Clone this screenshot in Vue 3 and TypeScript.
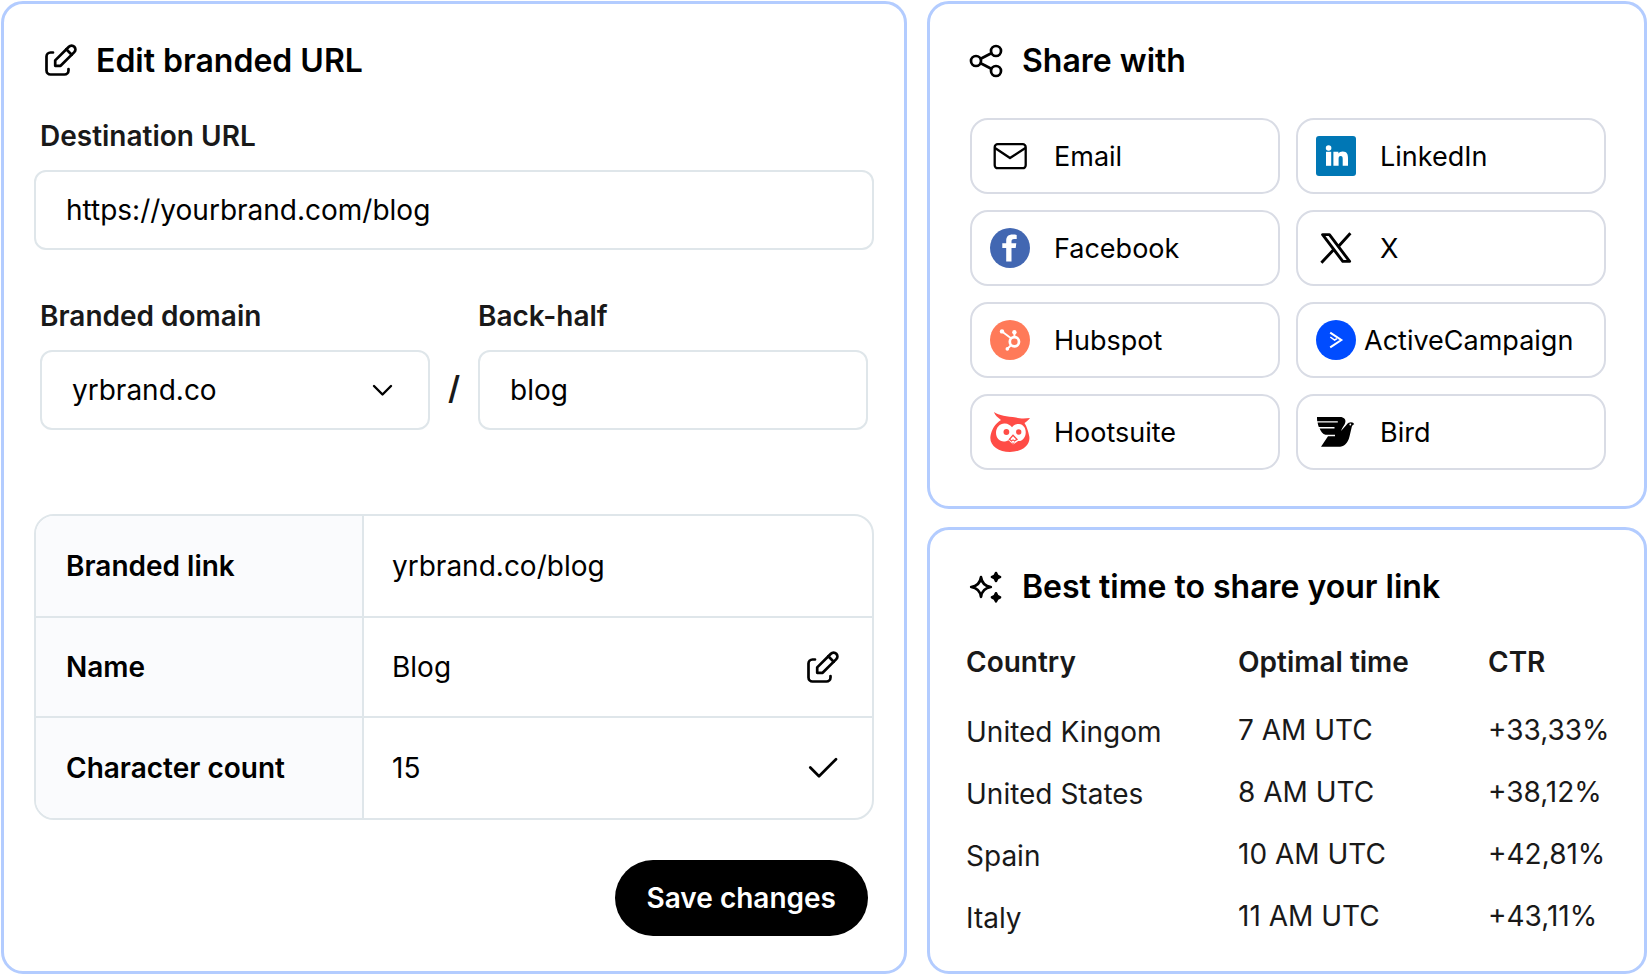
<script setup lang="ts">
import { ref } from 'vue'

interface Channel {
  id: string
  name: string
  tight?: boolean
}

interface TimeSlot {
  country: string
  time: string
  ctr: string
}

const destination = ref('https://yourbrand.com/blog')
const domain = ref('yrbrand.co')
const backHalf = ref('blog')

const channels: Channel[] = [
  { id: 'email', name: 'Email' },
  { id: 'linkedin', name: 'LinkedIn' },
  { id: 'facebook', name: 'Facebook' },
  { id: 'x', name: 'X' },
  { id: 'hubspot', name: 'Hubspot' },
  { id: 'activecampaign', name: 'ActiveCampaign', tight: true },
  { id: 'hootsuite', name: 'Hootsuite' },
  { id: 'bird', name: 'Bird' },
]

const slots: TimeSlot[] = [
  { country: 'United Kingom', time: '7 AM UTC', ctr: '+33,33%' },
  { country: 'United States', time: '8 AM UTC', ctr: '+38,12%' },
  { country: 'Spain', time: '10 AM UTC', ctr: '+42,81%' },
  { country: 'Italy', time: '11 AM UTC', ctr: '+43,11%' },
]
</script>

<template>
  <main class="page">
    <form class="card edit" @submit.prevent>
      <header class="title">
        <svg class="icon" viewBox="0 0 40 40" aria-hidden="true">
          <path d="M13 12.5h-2.5a4 4 0 0 0-4 4v14a4 4 0 0 0 4 4h14a4 4 0 0 0 4-4V29" />
          <path d="M15.2 25.8v-5.4L28.9 6.7a3.8 3.8 0 0 1 5.4 5.4L20.6 25.8z" />
          <path d="M26.3 9.3l5.4 5.4" />
        </svg>
        <h2>Edit branded URL</h2>
      </header>

      <div class="field destination">
        <label for="destination">Destination URL</label>
        <input id="destination" v-model="destination" type="text" />
      </div>

      <div class="pair">
        <div class="field">
          <label for="domain">Branded domain</label>
          <div class="select">
            <select id="domain" v-model="domain">
              <option value="yrbrand.co">yrbrand.co</option>
            </select>
            <svg class="chevron" viewBox="0 0 24 24" aria-hidden="true">
              <path d="M4 8l8.5 8.5L21 8" />
            </svg>
          </div>
        </div>
        <span class="slash">/</span>
        <div class="field">
          <label for="back-half">Back-half</label>
          <input id="back-half" v-model="backHalf" type="text" />
        </div>
      </div>

      <div class="summary">
        <table>
          <tbody>
            <tr>
              <th scope="row">Branded link</th>
              <td>yrbrand.co/blog</td>
            </tr>
            <tr>
              <th scope="row">Name</th>
              <td>
                <div class="value">
                  Blog
                  <button class="plain" type="button" aria-label="Edit name">
                    <svg class="icon" viewBox="0 0 40 40" aria-hidden="true">
                      <path d="M13 12.5h-2.5a4 4 0 0 0-4 4v14a4 4 0 0 0 4 4h14a4 4 0 0 0 4-4V29" />
                      <path d="M15.2 25.8v-5.4L28.9 6.7a3.8 3.8 0 0 1 5.4 5.4L20.6 25.8z" />
                      <path d="M26.3 9.3l5.4 5.4" />
                    </svg>
                  </button>
                </div>
              </td>
            </tr>
            <tr>
              <th scope="row">Character count</th>
              <td>
                <div class="value">
                  15
                  <svg class="icon" viewBox="0 0 40 40" aria-hidden="true">
                    <path d="M8.3 19.5L17 28.2L34 11.2" />
                  </svg>
                </div>
              </td>
            </tr>
          </tbody>
        </table>
      </div>

      <button class="save" type="submit">Save changes</button>
    </form>

    <div class="side">
      <section class="card share">
        <header class="title">
          <svg class="icon" viewBox="0 0 40 40" aria-hidden="true">
            <circle cx="10" cy="21" r="5" />
            <circle cx="30" cy="11" r="5" />
            <circle cx="30" cy="31" r="5" />
            <path d="M14.7 18.7L25.3 13.3M14.7 23.3L25.3 28.7" />
          </svg>
          <h2>Share with</h2>
        </header>

        <div class="channels">
          <button
            v-for="c in channels"
            :key="c.id"
            type="button"
            class="channel"
            :class="{ tight: c.tight }"
          >
            <svg v-if="c.id === 'email'" class="logo" viewBox="0 0 40 40" aria-hidden="true">
              <g fill="none" stroke="#000" stroke-width="2.3" stroke-linejoin="round">
                <rect x="4.7" y="8.2" width="31" height="24" rx="3" />
                <path d="M5 12L20 22L35.400 12" />
              </g>
            </svg>
            <svg v-else-if="c.id === 'linkedin'" class="logo" viewBox="0 0 40 40" aria-hidden="true">
              <rect width="40" height="40" rx="3" fill="#0077b5" />
              <g fill="#fff">
                <circle cx="12.6" cy="12" r="2.8" />
                <rect x="10" y="15.8" width="5.2" height="14" />
                <path d="M17.4 15.8H22.4V17.600C23.200 16.300 24.700 15.400 26.700 15.400C31 15.400 32 18.200 32 22V29.800H26.700V23C26.700 21.200 26.400 20 24.700 20C23 20 22.600 21.300 22.600 23V29.800H17.400Z" />
              </g>
            </svg>
            <svg v-else-if="c.id === 'facebook'" class="logo" viewBox="0 0 40 40" aria-hidden="true">
              <circle cx="20" cy="20" r="20" fill="#4267b2" />
              <path
                fill="#fff"
                d="M16.2 33.5V19.9H12.3V15.3H16.2V12.6C16.2 8.6 18.6 6.6 22.5 6.6C24.2 6.6 25.7 6.8 26.7 6.9V10.9H24.2C22 10.9 21.5 12 21.5 13.4V15.3H26.3L25.7 19.9H21.5V33.5Z"
              />
            </svg>
            <svg v-else-if="c.id === 'x'" class="logo" viewBox="0 0 40 40" aria-hidden="true">
              <g fill="none" stroke="#000" stroke-width="2.9" stroke-linejoin="round">
                <path d="M6.600 6.600H13.400L33.600 33.400H26.800Z" />
                <path d="M5.400 34.800L17.800 21.500M34.400 5.200L22.400 18.400" />
              </g>
            </svg>
            <svg v-else-if="c.id === 'hubspot'" class="logo" viewBox="0 0 40 40" aria-hidden="true">
              <circle cx="20" cy="20" r="20" fill="#ff7a59" />
              <g fill="none" stroke="#fff" stroke-width="1.9">
                <circle cx="24.4" cy="21.7" r="4.6" stroke-width="2.7" />
                <path d="M12 11.4L21 18.3M24.4 12.5V17M17.6 28.6L21.2 25" />
              </g>
              <g fill="#fff">
                <circle cx="12" cy="11.4" r="2.2" />
                <circle cx="24.4" cy="12.3" r="2.2" />
                <circle cx="17.3" cy="28.9" r="1.8" />
              </g>
            </svg>
            <svg v-else-if="c.id === 'activecampaign'" class="logo" viewBox="0 0 40 40" aria-hidden="true">
              <circle cx="20" cy="20" r="20" fill="#004cff" />
              <g fill="none" stroke="#fff">
                <path d="M14.2 12.6L25.3 20L14.2 27.3" stroke-width="2" />
                <path d="M14.3 17L18.6 20L21 18.6" stroke-width="1.5" />
              </g>
            </svg>
            <svg v-else-if="c.id === 'hootsuite'" class="logo" viewBox="0 0 40 40" aria-hidden="true">
              <path
                fill="#ff4c46"
                d="M4 0C9 3.5 17 4.600 26 5.4C31 7 36 6.4 40 6C38.500 8 36.500 9.600 34.500 11C37 15 38.200 19 39.200 24C41 33 32 40 20 40C8 40-1 33 .5 24C1.500 18 5 11.500 11 8C7.500 5.500 4.800 3 4 0Z"
              />
              <path
                fill="#fff"
                d="M22 15.200C24 12.800 26.500 11.800 29 12C33.600 12.400 36 16.400 35.700 21C35.400 26 32 29.400 28.200 29L23 32.600L18.500 28.200C12 32 6 27.400 6 20.800C6 15.200 10 11.200 14.800 11.400C18 11.600 20.400 13 22 15.200Z"
              />
              <path fill="#ff4c46" d="M23 22.2L18.4 27.400L21.400 29.600L23 33L24.800 29.600L28 27.400Z" />
              <path fill="#fff" d="M23 24.300L20.400 27.200L21.700 28.200L23 27.300L24.500 28.200L26 27.200ZM21.600 29.500L23 28.600L24.600 29.500L23 31.500Z" />
              <circle cx="16.4" cy="20" r="2.9" fill="#ff4c46" />
              <circle cx="28.7" cy="20" r="2.7" fill="#ff4c46" />
            </svg>
            <svg v-else class="logo" viewBox="0 0 40 40" aria-hidden="true">
              <path
                d="M1 5H24C28 5 29.800 7.4 29.400 10C29 13 26 15.300 25 19L30.6 12.8C32 11 33.4 10.3 35 10.3C36.7 10.3 37.7 11 38.2 12.3C36.6 12.8 35.9 14 35.5 16L33.500 24.500C31.800 31.5 28.2 34.800 22 34.800H5L12 24.300H19V22.800H9.500C6.700 21.800 4.800 19.400 3.600 16.400H18.500V15H2.800C2.200 13.500 1.800 12 1.600 10.600H21.800V9.200H1.2C1 7.700 1 6.400 1 5Z"
              />
              <circle cx="34.3" cy="12.5" r=".9" fill="#fff" />
            </svg>
            <span class="name">{{ c.name }}</span>
          </button>
        </div>
      </section>

      <section class="card times">
        <header class="title">
          <svg class="icon" viewBox="0 0 40 40" aria-hidden="true">
            <path d="M15 11.2C15.9 17.3 18.7 20.1 24.8 21C18.7 21.9 15.9 24.7 15 30.8C14.1 24.7 11.3 21.9 5.2 21C11.3 20.1 14.1 17.3 15 11.2Z" />
            <path class="solid" d="M30 7C30.5 9.6 31.4 10.5 34 11C31.4 11.5 30.5 12.4 30 15C29.5 12.4 28.6 11.5 26 11C28.6 10.5 29.5 9.6 30 7Z" />
            <path class="solid" d="M30 27.3C30.5 29.9 31.4 30.8 34 31.3C31.4 31.8 30.5 32.7 30 35.3C29.5 32.7 28.6 31.8 26 31.3C28.6 30.8 29.5 29.9 30 27.3Z" />
          </svg>
          <h2>Best time to share your link</h2>
        </header>

        <table>
          <colgroup>
            <col class="col-country" />
            <col class="col-time" />
            <col />
          </colgroup>
          <thead>
            <tr>
              <th scope="col">Country</th>
              <th scope="col">Optimal time</th>
              <th scope="col">CTR</th>
            </tr>
          </thead>
          <tbody>
            <tr v-for="s in slots" :key="s.country">
              <td class="country">{{ s.country }}</td>
              <td>{{ s.time }}</td>
              <td>{{ s.ctr }}</td>
            </tr>
          </tbody>
        </table>
      </section>
    </div>
  </main>
</template>

<style>
body {
  margin: 0;
  background: #fff;
}
</style>

<style scoped>
.page,
.page * {
  box-sizing: border-box;
}

.page {
  display: grid;
  grid-template-columns: 906fr 720fr;
  gap: 20px;
  padding: 1px 0 0 1px;
  font-family: Inter, 'Liberation Sans', sans-serif;
  font-size: 28px;
  line-height: 32px;
  color: #000;
}

.card {
  border: 3px solid #b3ccff;
  border-radius: 22px;
  background: #fff;
}

.edit {
  display: flex;
  flex-direction: column;
  padding: 36px 30px 35px;
}

.side {
  display: flex;
  flex-direction: column;
  gap: 18px;
}

.share {
  padding: 36px 38px 36px 36px;
}

.times {
  flex: 1;
  padding: 36px 0 24px 36px;
}

.title {
  display: flex;
  align-items: center;
  gap: 16px;
  height: 40px;
}

.edit .title {
  padding-left: 6px;
}

h2 {
  margin: 0;
  padding-top: 2px;
  font-size: 32px;
  line-height: 40px;
  font-weight: 600;
}

.icon {
  display: block;
  flex: none;
  width: 40px;
  height: 40px;
  fill: none;
  stroke: #000;
  stroke-width: 2.7;
  stroke-linecap: round;
  stroke-linejoin: round;
}

.icon .solid {
  fill: #000;
}

.field {
  display: flex;
  flex: 1;
  flex-direction: column;
  gap: 18px;
  min-width: 0;
}

.destination {
  flex: none;
  margin-top: 40px;
}

.destination label {
  padding-left: 6px;
}

label {
  font-weight: 600;
  color: #191919;
}

input,
select {
  width: 100%;
  height: 80px;
  padding: 0 30px;
  border: 2px solid #dfe6ea;
  border-radius: 12px;
  background: #fff;
  color: #000;
  font: inherit;
  appearance: none;
}

.pair {
  display: flex;
  align-items: flex-end;
  margin-top: 50px;
  padding: 0 6px;
}

.slash {
  width: 48px;
  height: 80px;
  color: #191919;
  font-size: 32px;
  font-weight: 600;
  line-height: 76px;
  text-align: center;
}

.select {
  position: relative;
}

.chevron {
  position: absolute;
  top: 28px;
  right: 36px;
  width: 24px;
  height: 24px;
  fill: none;
  stroke: #000;
  stroke-width: 2.4;
  stroke-linecap: round;
  stroke-linejoin: round;
  pointer-events: none;
}

.summary {
  margin-top: 84px;
  border: 2px solid #dfe6ea;
  border-radius: 20px;
  overflow: hidden;
}

table {
  width: 100%;
  border-spacing: 0;
  table-layout: fixed;
}

th,
td {
  padding: 0;
  text-align: left;
}

.summary th,
.summary td {
  height: 100px;
  border-top: 2px solid #dfe6ea;
}

.summary tr:first-child > * {
  border-top: 0;
}

.summary tr:last-child > * {
  height: 102px;
}

.summary th {
  width: 328px;
  padding-left: 30px;
  border-right: 2px solid #dfe6ea;
  background: #fafbfd;
  font-weight: 600;
}

.summary td {
  padding: 0 30px 0 28px;
}

.value {
  display: flex;
  align-items: center;
  justify-content: space-between;
}

.plain {
  padding: 0;
  border: 0;
  background: none;
}

.save {
  align-self: flex-end;
  height: 76px;
  margin: 40px 6px 0 0;
  padding: 0 32px;
  border: 0;
  border-radius: 38px;
  background: #000;
  color: #fff;
  font: inherit;
  font-weight: 600;
}

.channels {
  display: grid;
  grid-template-columns: 1fr 1fr;
  gap: 16px;
  margin-top: 38px;
  padding-left: 4px;
}

.channel {
  display: flex;
  align-items: center;
  gap: 24px;
  height: 76px;
  padding: 0 18px;
  border: 2px solid #d9dce5;
  border-radius: 18px;
  background: #fff;
  color: #000;
  font: inherit;
  font-size: 27px;
}

.channel.tight {
  gap: 8px;
}

.name {
  padding-top: 2px;
}

.logo {
  display: block;
  flex: none;
  width: 40px;
  height: 40px;
}

.times table {
  margin-top: 40px;
  color: #191919;
}

.times th {
  height: 53px;
  font-weight: 600;
  vertical-align: top;
}

.times td {
  height: 62px;
}

.times .country {
  padding-top: 4px;
}

.col-country {
  width: 272px;
}

.col-time {
  width: 250px;
}
</style>
